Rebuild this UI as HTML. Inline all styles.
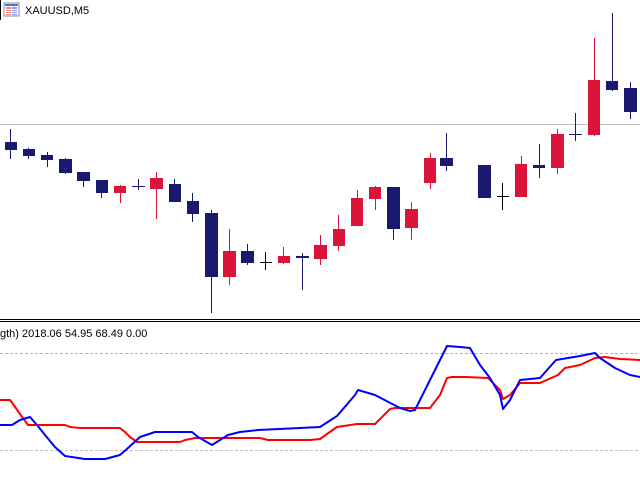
<!DOCTYPE html>
<html><head><meta charset="utf-8"><style>
html,body{margin:0;padding:0;background:#fff;width:640px;height:480px;overflow:hidden}
svg{display:block}
text{font-family:"Liberation Sans",sans-serif}
</style></head><body>
<svg width="640" height="480" viewBox="0 0 640 480" shape-rendering="crispEdges">
<rect width="640" height="480" fill="#fff"/>
<rect x="0" y="0" width="1" height="20" fill="#000"/>
<!-- icon -->
<rect x="4" y="3" width="15" height="13" fill="#fff" stroke="#8a8a9a"/>
<rect x="5" y="4" width="13" height="2" fill="#5a6ad8"/>
<rect x="6" y="7" width="5" height="8" fill="#e88a7a"/>
<rect x="12" y="7" width="5" height="8" fill="#8a9ae8"/>
<rect x="6" y="9" width="11" height="1" fill="#fff"/>
<rect x="6" y="11" width="11" height="1" fill="#fff"/>
<rect x="6" y="13" width="11" height="1" fill="#fff"/>
<text x="25" y="14" font-size="11" fill="#000">XAUUSD,M5</text>
<!-- price line -->
<rect x="0" y="124" width="640" height="1" fill="#c0c0c0"/>
<g id="c">
<!-- navy candles -->
<g fill="#191970">
<rect x="10" y="129" width="1" height="30"/><rect x="5" y="142" width="12" height="8"/>
<rect x="28" y="148" width="1" height="11"/><rect x="23" y="149" width="12" height="7"/>
<rect x="47" y="152" width="1" height="15"/><rect x="41" y="155" width="12" height="5"/>
<rect x="65" y="158" width="1" height="16"/><rect x="59" y="159" width="13" height="14"/>
<rect x="83" y="172" width="1" height="15"/><rect x="77" y="172" width="13" height="9"/>
<rect x="101" y="180" width="1" height="18"/><rect x="96" y="180" width="12" height="13"/>
<rect x="138" y="179" width="1" height="11"/><rect x="132" y="186" width="13" height="1"/>
<rect x="174" y="179" width="1" height="23"/><rect x="169" y="184" width="12" height="18"/>
<rect x="192" y="193" width="1" height="29"/><rect x="187" y="201" width="12" height="13"/>
<rect x="211" y="210" width="1" height="103"/><rect x="205" y="213" width="13" height="64"/>
<rect x="247" y="244" width="1" height="21"/><rect x="241" y="251" width="13" height="12"/>
<rect x="302" y="253" width="1" height="37"/><rect x="296" y="256" width="13" height="2"/>
<rect x="393" y="187" width="1" height="53"/><rect x="387" y="187" width="13" height="42"/>
<rect x="446" y="133" width="1" height="38"/><rect x="440" y="158" width="13" height="8"/>
<rect x="484" y="165" width="1" height="33"/><rect x="478" y="165" width="13" height="33"/>
<rect x="539" y="144" width="1" height="34"/><rect x="533" y="165" width="12" height="3"/>
<rect x="575" y="113" width="1" height="28"/><rect x="569" y="134" width="13" height="1"/>
<rect x="612" y="13" width="1" height="78"/><rect x="606" y="81" width="12" height="9"/>
<rect x="630" y="82" width="1" height="37"/><rect x="624" y="88" width="13" height="24"/>
</g>
<g fill="#dc143c">
<rect x="120" y="185" width="1" height="18"/><rect x="114" y="186" width="12" height="7"/>
<rect x="156" y="172" width="1" height="47"/><rect x="150" y="178" width="13" height="11"/>
<rect x="229" y="229" width="1" height="56"/><rect x="223" y="251" width="13" height="26"/>
<rect x="283" y="247" width="1" height="17"/><rect x="278" y="256" width="12" height="7"/>
<rect x="320" y="235" width="1" height="30"/><rect x="314" y="245" width="13" height="14"/>
<rect x="338" y="215" width="1" height="36"/><rect x="333" y="229" width="12" height="17"/>
<rect x="357" y="190" width="1" height="36"/><rect x="351" y="198" width="12" height="28"/>
<rect x="375" y="186" width="1" height="24"/><rect x="369" y="187" width="12" height="12"/>
<rect x="411" y="202" width="1" height="38"/><rect x="405" y="209" width="13" height="19"/>
<rect x="430" y="153" width="1" height="36"/><rect x="424" y="158" width="12" height="25"/>
<rect x="521" y="156" width="1" height="41"/><rect x="515" y="164" width="12" height="33"/>
<rect x="557" y="129" width="1" height="45"/><rect x="551" y="134" width="13" height="34"/>
<rect x="594" y="38" width="1" height="98"/><rect x="588" y="80" width="12" height="55"/>
</g>
<g fill="#000">
<rect x="265" y="252" width="1" height="18"/><rect x="260" y="262" width="12" height="1"/>
<rect x="502" y="183" width="1" height="27"/><rect x="497" y="196" width="12" height="1"/>
</g>
</g>
<!-- separator -->
<rect x="0" y="319" width="640" height="1" fill="#000"/>
<rect x="0" y="321" width="640" height="1" fill="#000"/>
<text x="0" y="337" font-size="11" fill="#000">gth) 2018.06 54.95 68.49 0.00</text>
<line x1="0" y1="353.5" x2="640" y2="353.5" stroke="#b4b4b4" stroke-dasharray="3,2"/>
<line x1="0" y1="450.5" x2="640" y2="450.5" stroke="#c0c0c0" stroke-dasharray="3,2"/>
<g shape-rendering="auto" fill="none" stroke-width="2" stroke-linejoin="round">
<polyline stroke="#ff0000" points="0,400 10,400 13,404 20,414 28,425 65,425 70,427 80,428 120,428 125,432 130,437 137,442 180,442 185,440 195,438 260,438 268,440 310,440 320,439 327,434 337,427 357,424 375,424 390,409 395,408 430,408 440,395 447,378 452,377 466,377 488,378 500,390 503,399 510,395 520,383 540,383 558,375 565,368 580,365 595,358 605,357 620,359 640,360"/>
<polyline stroke="#0000ff" points="0,425 12,425 20,420 30,417 37,425 45,435 55,447 65,456 85,459 105,459 120,455 128,448 140,437 155,432 192,432 198,437 212,445 228,435 240,432 258,430 300,428 320,427 337,416 355,395 358,390 375,395 400,408 410,411 415,410 430,380 447,346 460,347 470,348 480,365 490,378 500,395 503,409 510,400 520,380 540,378 556,360 580,356 590,354 595,353 600,358 615,368 630,375 640,377"/>
</g>
</svg>
</body></html>
